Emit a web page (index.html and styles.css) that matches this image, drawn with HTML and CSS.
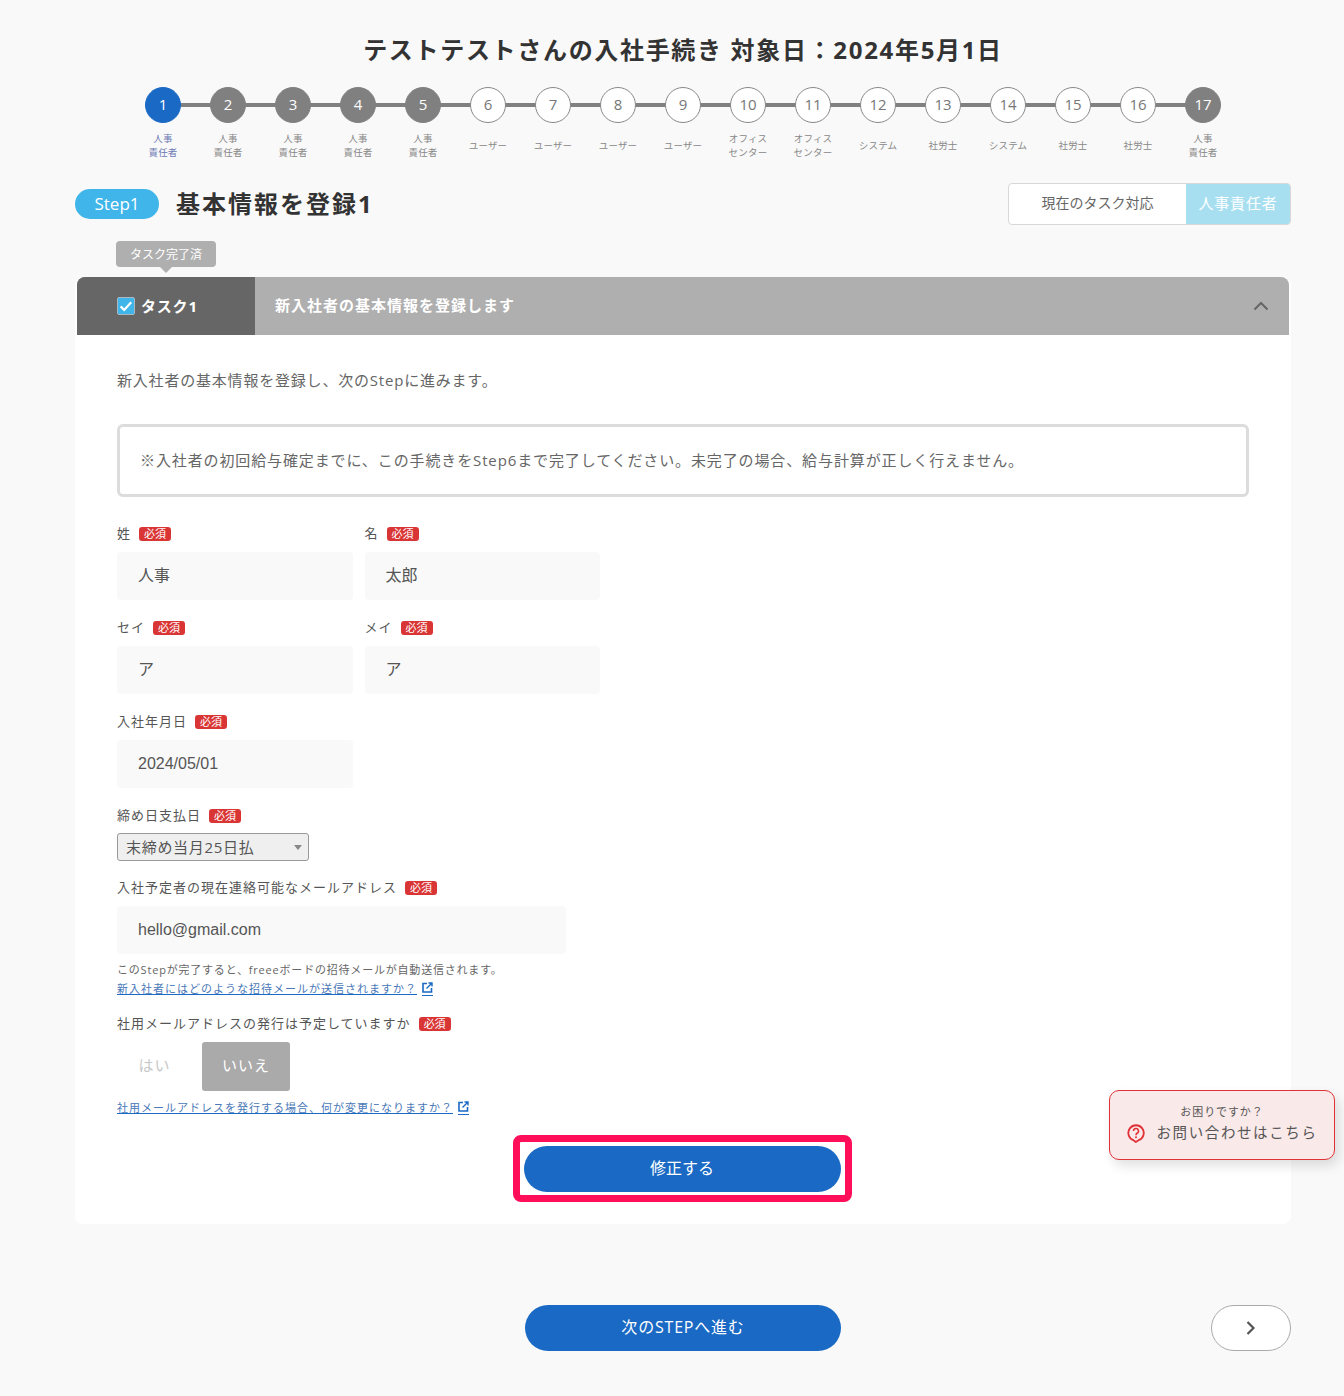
FILE: index.html
```html
<!DOCTYPE html>
<html lang="ja">
<head>
<meta charset="utf-8">
<title>入社手続き</title>
<link rel="stylesheet" href="styles.css">
</head>
<body>
<main class="page">
  <h1 class="title">テストテストさんの入社手続き 対象日：2024年5月1日</h1>
  <ol class="stepper">
    <li class="step current"><span class="dot">1</span><span class="who">人事<br>責任者</span></li>
    <li class="step hr"><span class="dot">2</span><span class="who">人事<br>責任者</span></li>
    <li class="step hr"><span class="dot">3</span><span class="who">人事<br>責任者</span></li>
    <li class="step hr"><span class="dot">4</span><span class="who">人事<br>責任者</span></li>
    <li class="step hr"><span class="dot">5</span><span class="who">人事<br>責任者</span></li>
    <li class="step"><span class="dot">6</span><span class="who single">ユーザー</span></li>
    <li class="step"><span class="dot">7</span><span class="who single">ユーザー</span></li>
    <li class="step"><span class="dot">8</span><span class="who single">ユーザー</span></li>
    <li class="step"><span class="dot">9</span><span class="who single">ユーザー</span></li>
    <li class="step"><span class="dot">10</span><span class="who">オフィス<br>センター</span></li>
    <li class="step"><span class="dot">11</span><span class="who">オフィス<br>センター</span></li>
    <li class="step"><span class="dot">12</span><span class="who single">システム</span></li>
    <li class="step"><span class="dot">13</span><span class="who single">社労士</span></li>
    <li class="step"><span class="dot">14</span><span class="who single">システム</span></li>
    <li class="step"><span class="dot">15</span><span class="who single">社労士</span></li>
    <li class="step"><span class="dot">16</span><span class="who single">社労士</span></li>
    <li class="step hr"><span class="dot">17</span><span class="who">人事<br>責任者</span></li>
  </ol>

  <div class="step-head">
    <div class="step-name">
      <span class="step-pill">Step1</span>
      <h2 class="step-title">基本情報を登録1</h2>
    </div>
    <div class="owner">
      <span class="owner-label">現在のタスク対応</span>
      <span class="owner-value">人事責任者</span>
    </div>
  </div>

  <div class="done-row"><span class="done-tip">タスク完了済</span></div>

  <section class="card">
    <header class="task-head">
      <div class="task-no">
        <svg class="check" width="18" height="18" viewBox="0 0 18 18" aria-hidden="true"><rect x="0.5" y="0.5" width="17" height="17" rx="1.5" fill="#3fb5ea" stroke="#a9b9c4"/><path d="M3.6 9.400l3.600 3.500 7-7.600" fill="none" stroke="#fff" stroke-width="2.200"/></svg>
        <span>タスク1</span>
      </div>
      <div class="task-name">新入社者の基本情報を登録します</div>
      <svg class="chev-up" width="16" height="10" viewBox="0 0 16 10" aria-hidden="true"><path d="M1.500 8.500L8 2l6.500 6.500" fill="none" stroke="#666" stroke-width="2"/></svg>
    </header>
    <div class="card-body">
      <p class="lead">新入社者の基本情報を登録し、次のStepに進みます。</p>
      <div class="notice">※入社者の初回給与確定までに、この手続きをStep6まで完了してください。未完了の場合、給与計算が正しく行えません。</div>

      <div class="form-row">
        <div class="field">
          <div class="label">姓<span class="req">必須</span></div>
          <div class="input">人事</div>
        </div>
        <div class="field">
          <div class="label">名<span class="req">必須</span></div>
          <div class="input">太郎</div>
        </div>
      </div>
      <div class="form-row">
        <div class="field">
          <div class="label">セイ<span class="req">必須</span></div>
          <div class="input">ア</div>
        </div>
        <div class="field">
          <div class="label">メイ<span class="req">必須</span></div>
          <div class="input">ア</div>
        </div>
      </div>
      <div class="form-row">
        <div class="field">
          <div class="label">入社年月日<span class="req">必須</span></div>
          <div class="input latin">2024/05/01</div>
        </div>
      </div>
      <div class="select-field">
        <div class="label">締め日支払日<span class="req">必須</span></div>
        <div class="select">末締め当月25日払<span class="caret"></span></div>
      </div>
      <div class="mail-field">
        <div class="label">入社予定者の現在連絡可能なメールアドレス<span class="req">必須</span></div>
        <div class="input wide latin">hello@gmail.com</div>
        <p class="note">このStepが完了すると、freeeボードの招待メールが自動送信されます。</p>
        <a class="help-link first" href="#">新入社者にはどのような招待メールが送信されますか？<svg class="ext" width="11" height="11" viewBox="0 0 11 11" aria-hidden="true"><path d="M5 1.500H1v8.500h8.500V6" fill="none" stroke="#1a69c4" stroke-width="1.600"/><path d="M4.500 6.500L9.500 1.500M6.500 1h3.500v3.500" fill="none" stroke="#1a69c4" stroke-width="1.400"/></svg></a>
      </div>
      <div class="choice-field">
        <div class="label">社用メールアドレスの発行は予定していますか<span class="req">必須</span></div>
        <div class="choices">
          <span class="choice">はい</span>
          <span class="choice on">いいえ</span>
        </div>
        <a class="help-link" href="#">社用メールアドレスを発行する場合、何が変更になりますか？<svg class="ext" width="11" height="11" viewBox="0 0 11 11" aria-hidden="true"><path d="M5 1.500H1v8.500h8.500V6" fill="none" stroke="#1a69c4" stroke-width="1.600"/><path d="M4.500 6.500L9.500 1.500M6.500 1h3.500v3.500" fill="none" stroke="#1a69c4" stroke-width="1.400"/></svg></a>
      </div>
      <div class="submit-row">
        <div class="highlight"><button class="btn submit" type="button">修正する</button></div>
      </div>
    </div>
  </section>

  <nav class="pager">
    <button class="btn next" type="button">次のSTEPへ進む</button>
    <button class="arrow" type="button" aria-label="次へ"><svg width="12" height="16" viewBox="0 0 12 16" aria-hidden="true"><path d="M2.500 2l6 6-6 6" fill="none" stroke="#555" stroke-width="2.200"/></svg></button>
  </nav>
</main>

<aside class="contact">
  <div class="contact-sub">お困りですか？</div>
  <div class="contact-main">
    <svg width="18" height="19" viewBox="0 0 18 19" aria-hidden="true"><path d="M6.500 16.200A7.700 7.700 0 1 1 11.600 16.200L8.800 18z" fill="none" stroke="#e03236" stroke-width="1.800"/><path d="M6.500 7a2.500 2.500 0 1 1 3.600 2.300c-.8.400-1.100.9-1.100 1.900" fill="none" stroke="#e03236" stroke-width="1.600"/><circle cx="9" cy="13.200" r="1" fill="#e03236"/></svg>
    <span>お問い合わせはこちら</span>
  </div>
</aside>
</body>
</html>
```
FILE: styles.css
```css
* { box-sizing: border-box; }
html, body { margin: 0; padding: 0; }
body {
  background: #f9f9f9;
  color: #333;
  font-family: "Open Sans", "Noto Sans CJK JP", sans-serif;
  height: 1396px;
  position: relative;
  overflow: hidden;
}
.page { width: 1216px; margin-left: 75px; padding-top: 32px; }
.title {
  margin: 0;
  font-size: 24px;
  line-height: 36px;
  font-weight: 700;
  letter-spacing: 1.680px;
  text-align: center;
  color: #333;
}
.stepper {
  list-style: none;
  margin: 19px 0 0;
  padding: 0;
  display: flex;
  justify-content: center;
}
.step {
  width: 65px;
  height: 88px;
  display: flex;
  flex-direction: column;
  align-items: center;
  position: relative;
  flex: none;
}
.step:not(:last-child)::after {
  content: "";
  position: absolute;
  left: 50%;
  width: 65px;
  top: 16px;
  height: 4px;
  background: #808080;
}
.dot {
  position: relative;
  z-index: 1;
  width: 36px;
  height: 36px;
  border-radius: 50%;
  border: 1px solid #888;
  background: #fff;
  color: #777;
  font-size: 15px;
  line-height: 33px;
  text-align: center;
}
.step.hr .dot { background: #808080; color: #fff; border-color: #808080; }
.step.current .dot { background: #1a69c4; color: #fff; border-color: #1a69c4; }
.who {
  margin-top: 5px;
  padding-top: 4px;
  width: 65px;
  text-align: center;
  font-size: 9.500px;
  line-height: 14px;
  letter-spacing: 0.2px;
  color: #888;
}
.who.single { padding-top: 11px; }
.step.current .who { color: #6d7bb5; }

.step-head {
  display: flex;
  align-items: center;
  justify-content: space-between;
  margin-top: 8px;
  height: 42px;
}
.step-name { display: flex; align-items: center; gap: 17px; }
.step-pill {
  width: 84px;
  height: 30px;
  border-radius: 15px;
  background: #3fb5ea;
  color: #fff;
  font-size: 17px;
  line-height: 30px;
  text-align: center;
}
.step-title { margin: 0; font-size: 24px; font-weight: 700; line-height: 36px; letter-spacing: 2px; color: #333; }
.owner {
  display: flex;
  height: 42px;
  border: 1px solid #d8d8d8;
  border-radius: 4px;
  overflow: hidden;
  background: #fff;
}
.owner-label {
  width: 177px;
  text-align: center;
  font-size: 14px;
  line-height: 38px;
  color: #666;
}
.owner-value {
  width: 104px;
  background: #a8dff0;
  color: #fff;
  font-size: 15px;
  line-height: 38px;
  letter-spacing: 0.8px;
  text-align: center;
}
.done-row { padding: 16px 0 0 41px; height: 52px; }
.done-tip {
  display: block;
  position: relative;
  width: 100px;
  height: 26px;
  border-radius: 4px;
  background: #afafaf;
  color: #fff;
  font-size: 12px;
  line-height: 27px;
  text-align: center;
}
.done-tip::after {
  content: "";
  position: absolute;
  left: 44px;
  top: 26px;
  border: 6px solid transparent;
  border-top-color: #afafaf;
  border-bottom-width: 0;
}
.card {
  background: #fff;
  border-radius: 8px;
  height: 947px;
}
.task-head {
  margin: 0 2px;
  height: 58px;
  display: flex;
  align-items: center;
  background: #afafaf;
  border-radius: 8px 8px 0 0;
  overflow: hidden;
  color: #fff;
  font-weight: 700;
}
.task-no {
  width: 178px;
  height: 58px;
  background: #666;
  display: flex;
  align-items: center;
  gap: 6px;
  padding-left: 40px;
  padding-bottom: 1px;
  font-size: 15px;
  letter-spacing: 0.8px;
  flex: none;
}
.task-name { flex: 1; padding: 0 0 4px 20px; font-size: 15px; letter-spacing: 1px; }
.chev-up { margin-right: 20px; flex: none; }
.card-body { padding: 0 42px; }
.lead { margin: 0; padding-top: 33px; font-size: 15px; line-height: 24px; letter-spacing: 0.8px; color: #666; }
.notice {
  margin-top: 32px;
  height: 73px;
  border: 3px solid #dcdcdc;
  border-radius: 6px;
  padding: 0 20px;
  font-size: 15px;
  line-height: 67px;
  letter-spacing: 0.88px;
  color: #666;
}
.form-row { display: flex; gap: 12px; margin-top: 18px; height: 76px; }
.notice + .form-row { margin-top: 28px; }
.field { width: 235.500px; }
.label {
  display: flex;
  align-items: center;
  font-size: 13px;
  line-height: 16px;
  height: 18px;
  padding-bottom: 2px;
  letter-spacing: 1px;
  color: #555;
  margin-bottom: 9px;
}
.req {
  margin: 2px 0 0 8px;
  width: 32px;
  height: 14px;
  border-radius: 3px;
  background: #d93535;
  color: #fff;
  font-size: 11px;
  line-height: 14px;
  letter-spacing: 0;
  text-align: center;
}
.input {
  height: 48px;
  border-radius: 4px;
  background: #f9f9f9;
  padding: 0 21px;
  font-size: 16px;
  line-height: 46px;
  color: #555;
}
.input.latin { font-family: "Liberation Sans", sans-serif; line-height: 48px; }
.input.wide { width: 449px; }
.select-field { margin-top: 18px; }
.select-field .label { margin-bottom: 8px; }
.select {
  position: relative;
  width: 192px;
  height: 28px;
  border: 1px solid #999;
  border-radius: 3px;
  background: #efefef;
  padding-left: 8px;
  font-size: 15px;
  line-height: 27px;
  letter-spacing: 0.7px;
  color: #555;
}
.caret {
  position: absolute;
  right: 6px;
  top: 11px;
  border: 4px solid transparent;
  border-top: 5px solid #888;
  border-bottom-width: 0;
}
.mail-field { margin-top: 18px; }
.note { margin: 7px 0 0; font-size: 11px; line-height: 18px; letter-spacing: 0.8px; color: #666; }
.help-link {
  display: inline-block;
  font-size: 11px;
  line-height: 14px;
  letter-spacing: 1px;
  color: #4a78b8;
  text-decoration: underline;
  text-decoration-color: #1a69c4;
}
.help-link.first { margin-top: 3px; display: block; }
.ext {
  box-sizing: content-box;
  margin-left: 5px;
  padding: 0 0 2px;
  border-bottom: 1px solid #1a69c4;
  vertical-align: -3px;
}
.choice-field { margin-top: 19px; }
.choices { display: flex; gap: 10px; }
.choice {
  width: 75px;
  height: 49px;
  border-radius: 3px;
  color: #c8c8c8;
  font-size: 15px;
  line-height: 47px;
  text-align: center;
  letter-spacing: 1px;
}
.choice.on { width: 88px; background: #aaa; color: #fff; }
.choice-field .help-link { margin-top: 10px; }
.submit-row { display: flex; justify-content: center; margin-top: 18px; padding-right: 2px; }
.highlight {
  width: 339px;
  height: 67px;
  border: 7px solid #ff0f5a;
  border-radius: 8px;
  padding: 4px;
}
.btn {
  display: block;
  border: 0;
  border-radius: 23px;
  background: #1a69c4;
  color: #fff;
  font-family: inherit;
  font-size: 16px;
  height: 46px;
  padding: 0 0 5px;
}
.submit { width: 100%; margin: 0; }
.pager {
  position: relative;
  display: flex;
  justify-content: center;
  margin-top: 81px;
}
.next { width: 316px; letter-spacing: 0.8px; }
.arrow {
  position: absolute;
  right: 0;
  top: 0;
  width: 80px;
  height: 46px;
  border-radius: 23px;
  border: 1px solid #aaa;
  background: #fff;
  padding: 0;
  display: flex;
  align-items: center;
  justify-content: center;
}
.contact {
  position: absolute;
  left: 1109px;
  top: 1090px;
  width: 226px;
  height: 70px;
  border: 1px solid #e03236;
  border-radius: 10px;
  background: #f9e9e9;
  box-shadow: 4px 6px 12px rgba(0,0,0,0.12);
  text-align: center;
  padding-top: 13px;
  color: #555;
}
.contact-sub { font-size: 11px; line-height: 16px; letter-spacing: 0.9px; }
.contact-main {
  display: flex;
  align-items: center;
  justify-content: center;
  gap: 12px;
  font-size: 14.500px;
  line-height: 24px;
  letter-spacing: 1.600px;
  margin-top: 1px;
}
```
